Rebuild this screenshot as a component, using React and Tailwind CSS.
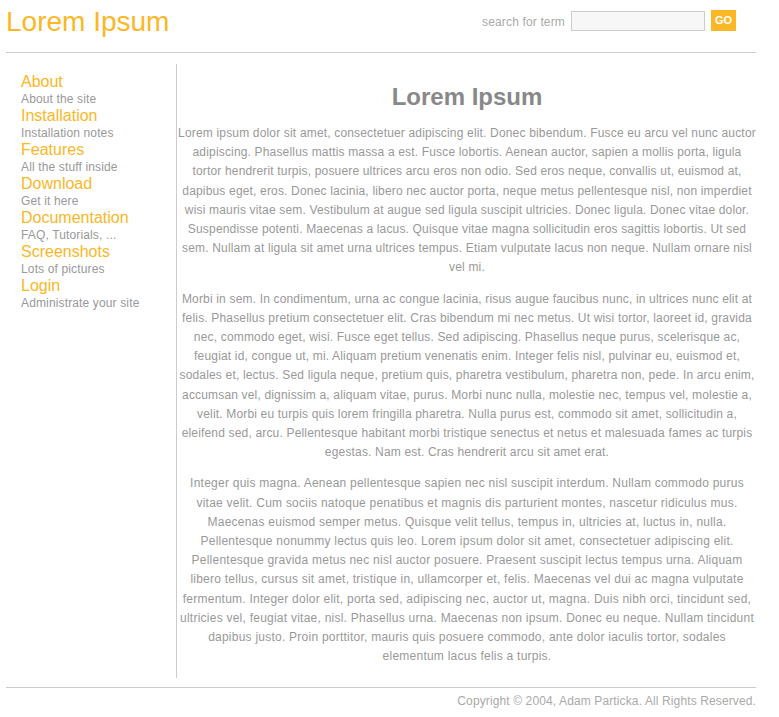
export default function App() {
  const nav = [
    ["About", "About the site"],
    ["Installation", "Installation notes"],
    ["Features", "All the stuff inside"],
    ["Download", "Get it here"],
    ["Documentation", "FAQ, Tutorials, ..."],
    ["Screenshots", "Lots of pictures"],
    ["Login", "Administrate your site"],
  ];
  const paras = [
    ["Lorem ipsum dolor sit amet, consectetuer adipiscing elit. Donec bibendum. Fusce eu arcu vel nunc auctor adipiscing. Phasellus mattis massa a est. Fusce lobortis. Aenean auctor, sapien a mollis porta, ligula tortor hendrerit turpis, posuere ultrices arcu eros non odio. Sed eros neque, convallis ut, euismod at, dapibus eget, eros. Donec lacinia, libero nec auctor porta, neque metus pellentesque nisl, non imperdiet wisi mauris vitae sem. Vestibulum at augue sed ligula suscipit ultricies. Donec ligula. Donec vitae dolor. Suspendisse potenti. Maecenas a lacus. Quisque vitae magna sollicitudin eros sagittis lobortis. Ut sed sem. Nullam at ligula sit amet urna ultrices tempus. Etiam vulputate lacus non neque. Nullam ornare nisl vel mi.", "tracking-[0.17px]"],
    ["Morbi in sem. In condimentum, urna ac congue lacinia, risus augue faucibus nunc, in ultrices nunc elit at felis. Phasellus pretium consectetuer elit. Cras bibendum mi nec metus. Ut wisi tortor, laoreet id, gravida nec, commodo eget, wisi. Fusce eget tellus. Sed adipiscing. Phasellus neque purus, scelerisque ac, feugiat id, congue ut, mi. Aliquam pretium venenatis enim. Integer felis nisl, pulvinar eu, euismod et, sodales et, lectus. Sed ligula neque, pretium quis, pharetra vestibulum, pharetra non, pede. In arcu enim, accumsan vel, dignissim a, aliquam vitae, purus. Morbi nunc nulla, molestie nec, tempus vel, molestie a, velit. Morbi eu turpis quis lorem fringilla pharetra. Nulla purus est, commodo sit amet, sollicitudin a, eleifend sed, arcu. Pellentesque habitant morbi tristique senectus et netus et malesuada fames ac turpis egestas. Nam est. Cras hendrerit arcu sit amet erat.", "tracking-[0.17px]"],
    ["Integer quis magna. Aenean pellentesque sapien nec nisl suscipit interdum. Nullam commodo purus vitae velit. Cum sociis natoque penatibus et magnis dis parturient montes, nascetur ridiculus mus. Maecenas euismod semper metus. Quisque velit tellus, tempus in, ultricies at, luctus in, nulla. Pellentesque nonummy lectus quis leo. Lorem ipsum dolor sit amet, consectetuer adipiscing elit. Pellentesque gravida metus nec nisl auctor posuere. Praesent suscipit lectus tempus urna. Aliquam libero tellus, cursus sit amet, tristique in, ullamcorper et, felis. Maecenas vel dui ac magna vulputate fermentum. Integer dolor elit, porta sed, adipiscing nec, auctor ut, magna. Duis nibh orci, tincidunt sed, ultricies vel, feugiat vitae, nisl. Phasellus urna. Maecenas non ipsum. Donec eu neque. Nullam tincidunt dapibus justo. Proin porttitor, mauris quis posuere commodo, ante dolor iaculis tortor, sodales elementum lacus felis a turpis.", "tracking-[0.24px]"],
  ];
  return (
    <div className="bg-white min-h-[717px] font-['Liberation_Sans',Arial,sans-serif] text-[#999]">
      <div className="ml-[6px] w-[750px]">
        <header className="flex items-start justify-between h-[53px] border-b border-[#ccc]">
          <h1 className="text-[28px] leading-[32px] mt-[6px] text-[#fbb726] font-normal">Lorem Ipsum</h1>
          <div className="flex items-center mt-[10px] mr-[20px]">
            <span className="text-[12px] text-[#aaa] mr-[6px] mt-[2px] tracking-[0.15px]">search for term</span>
            <input className="w-[134px] h-[20px] bg-[#f7f7f7] border border-[#ccc] outline-none" />
            <button className="ml-[6px] w-[25px] h-[21px] bg-[#fbb726] text-white text-[11px] font-bold leading-[21px]">GO</button>
          </div>
        </header>
        <div className="flex mt-[11px]">
          <nav className="w-[171px] shrink-0 pl-[15px] pt-[9px] border-r border-[#ccc] min-h-[612px]">
            {nav.map(([t, d]) => (
              <div key={t}>
                <div className="text-[16px] leading-[18px] text-[#fbb726]">{t}</div>
                <div className="text-[12px] leading-[16px] text-[#999] tracking-[0.14px]">{d}</div>
              </div>
            ))}
          </nav>
          <main className="flex-1 pl-[1px] text-center">
            <h2 className="text-[24px] font-bold text-[#888] leading-[28px] mt-[19px] mb-[13px]">Lorem Ipsum</h2>
            {paras.map(([p, tr], i) => (
              <p key={i} className={"text-[12px] leading-[19.2px] text-[#999] mb-[12px] " + tr}>{p}</p>
            ))}
          </main>
        </div>
        <footer className="border-t border-[#ccc] mt-[9px] pt-[5px] text-right text-[12px] text-[#aaa] leading-[16px] tracking-[0.12px]">
          Copyright © 2004, Adam Particka. All Rights Reserved.
        </footer>
      </div>
    </div>
  );
}
